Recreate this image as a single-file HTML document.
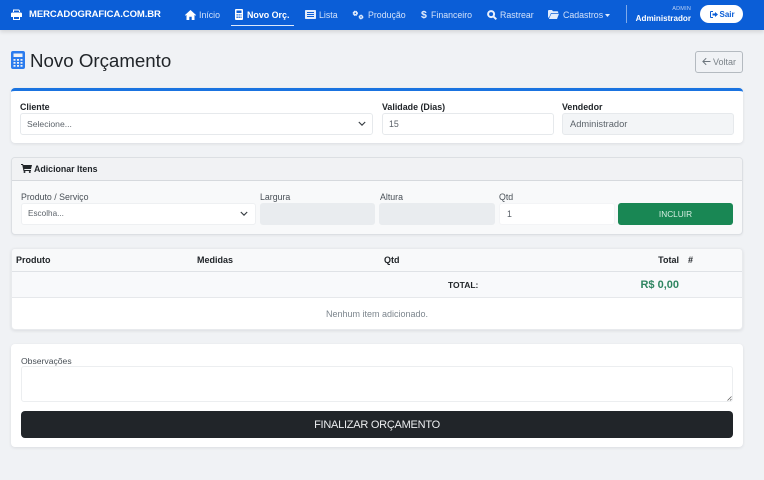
<!DOCTYPE html>
<html lang="pt-BR">
<head>
<meta charset="utf-8">
<title>Novo Orçamento</title>
<style>
*{box-sizing:border-box;margin:0;padding:0}
html,body{width:764px;height:480px;overflow:hidden;background:#f0f2f5;font-family:"Liberation Sans",sans-serif;color:#212529}
.a{position:absolute}
.t{position:absolute;white-space:nowrap;line-height:12px;height:12px}
nav{position:absolute;left:0;top:0;width:764px;height:30px;background:#0b5ed7;box-shadow:0 2px 4px rgba(0,0,0,.12)}
.n{color:#d3e2fa;font-size:8.800px;top:9px}
.card{position:absolute;background:#fff;border-radius:4px;box-shadow:0 1px 3px rgba(0,0,0,.09)}
.lb{font-size:8.900px;font-weight:bold;color:#212529}
.ll{font-size:8.800px;color:#495057}
.inp{position:absolute;height:22px;background:#fff;border:1px solid #e6e9ec;border-radius:3px;font-size:8.800px;line-height:20px;color:#5c636a;padding-left:6px;white-space:nowrap}
svg{position:absolute;display:block}
</style>
</head>
<body>
<nav>
<svg style="left:11px;top:9px" width="11" height="11" viewBox="0 0 11 11"><path fill="#fff" fill-rule="evenodd" d="M2 .5h6L9 1.500V4H8V1.800L7.200 1.500H3V4H2zM1.300 3.500h8.400c.7 0 1.300.6 1.300 1.300V8H9v3H2V8H0V4.800c0-.7.600-1.300 1.300-1.300zM3 8v2h5V8z"/></svg>
<div class="t" style="left:29px;top:9px;font-size:9.500px;font-weight:bold;color:#fff;letter-spacing:-.08px">MERCADOGRAFICA.COM.BR</div>

<svg style="left:185px;top:10px" width="11" height="10" viewBox="0 0 11 10"><path fill="#fff" d="M5.500 0L11 5l-.6.700-.9-.8V10H6.700V6.800H4.300V10H1.500V4.900l-.9.800L0 5z"/></svg>
<div class="t n" style="left:199px">Início</div>

<svg style="left:235px;top:9px" width="8" height="11" viewBox="0 0 8 11"><path fill="#fff" fill-rule="evenodd" d="M1 0h6a1 1 0 0 1 1 1v9a1 1 0 0 1-1 1H1a1 1 0 0 1-1-1V1a1 1 0 0 1 1-1zM1.500 1.500v2.500h5V1.500zM1.500 5.200v1.300h1.300V5.200zm2 0v1.300h1.300V5.200zm2 0v1.300h1V5.200zM1.500 7.500v1.500h1.300V7.500zm2 0v1.500h1.300V7.500zm2 0v1.500h1V7.500z"/></svg>
<div class="t" style="left:247px;top:8.500px;font-size:8.900px;font-weight:bold;color:#fff">Novo Orç.</div>
<div class="a" style="left:231px;top:25px;width:63px;height:1px;background:#dce8fb"></div>

<svg style="left:305px;top:10px" width="11" height="9" viewBox="0 0 11 9"><path fill="#e3edfc" fill-rule="evenodd" d="M.8 0h9.400c.4 0 .8.400.8.800v7.400c0 .4-.4.800-.8.800H.8C.4 9 0 8.600 0 8.200V.8C0 .4.400 0 .8 0zM2 2v1h7V2zM2 4v1h7V4zM2 6v1h7V6z"/></svg>
<div class="t n" style="left:319px">Lista</div>

<svg style="left:352px;top:10px" width="12" height="10" viewBox="0 0 12 10"><circle cx="3.300" cy="3.300" r="2" fill="#e3edfc" stroke="#e3edfc" stroke-width="1.300" stroke-dasharray="1.200 .4"/><circle cx="3.300" cy="3.300" r=".8" fill="#0b5ed7"/><circle cx="9" cy="7" r="1.800" fill="#e3edfc" stroke="#e3edfc" stroke-width="1.200" stroke-dasharray="1 .4"/><circle cx="9" cy="7" r=".7" fill="#0b5ed7"/></svg>
<div class="t n" style="left:368px">Produção</div>

<div class="t" style="left:421px;top:9px;font-size:10.500px;font-weight:bold;color:#e3edfc">$</div>
<div class="t n" style="left:431px">Financeiro</div>

<svg style="left:487px;top:10px" width="10" height="10" viewBox="0 0 10 10"><circle cx="4.100" cy="4.100" r="3" fill="none" stroke="#e9f0fd" stroke-width="2"/><path d="M6.400 6.400L9.300 9.300" stroke="#e9f0fd" stroke-width="2"/></svg>
<div class="t n" style="left:500px">Rastrear</div>

<svg style="left:548px;top:10px" width="11" height="9" viewBox="0 0 11 9"><path fill="#e3edfc" d="M1 0h3l1 1.200h4.300c.5 0 .9.400.9.900v.9H3L1 7.500H0V1a1 1 0 0 1 1-1zM3.300 3.800H11L9 9H.9z"/></svg>
<div class="t n" style="left:563px">Cadastros</div>
<svg style="left:604.500px;top:13.500px" width="5" height="3" viewBox="0 0 5 3"><path fill="#e3edfc" d="M0 0h5L2.500 3z"/></svg>

<div class="a" style="left:626px;top:5px;width:1px;height:18px;background:#7faaea"></div>
<div class="t" style="right:73px;top:3px;font-size:5.500px;color:#bcd2f5;letter-spacing:.2px">ADMIN</div>
<div class="t" style="right:73px;top:12.500px;font-size:8.100px;font-weight:bold;color:#fff">Administrador</div>
<div class="a" style="left:700px;top:5px;width:43px;height:18px;background:#fff;border-radius:9px"></div>
<svg style="left:710px;top:11px" width="8" height="7" viewBox="0 0 8 7"><path fill="none" stroke="#0b5ed7" stroke-width="1" d="M3 .5H1a.5.500 0 0 0-.5.500v5a.5.500 0 0 0 .5.500h2"/><path fill="#0b5ed7" d="M5 1l3 2.500L5 6V4.500H2.500v-2H5z"/></svg>
<div class="t" style="left:719.500px;top:8.500px;font-size:8px;font-weight:bold;color:#0b5ed7">Sair</div>
</nav>

<svg style="left:11px;top:51px" width="14" height="18" viewBox="0 0 14 18"><path fill="#2b7cee" fill-rule="evenodd" d="M2 0h10a2 2 0 0 1 2 2v14a2 2 0 0 1-2 2H2a2 2 0 0 1-2-2V2a2 2 0 0 1 2-2zM2.500 2.500v3.500h9V2.500zM2.500 8v1.700h2V8zm3.500 0v1.700h2V8zm3.500 0v1.700h2V8zM2.500 11v1.700h2V11zm3.500 0v1.700h2V11zm3.500 0v1.700h2V11zM2.500 14v1.700h2V14zm3.500 0v1.700h2V14zm3.500 0v1.700h2V14z"/></svg>
<div class="t" style="left:30px;top:50px;height:22px;line-height:22px;font-size:18.700px;color:#212529">Novo Orçamento</div>

<div class="a" style="left:695px;top:51px;width:48px;height:22px;border:1px solid #b4bac0;border-radius:3px"></div>
<svg style="left:702px;top:57px" width="9" height="9" viewBox="0 0 9 9"><path fill="none" stroke="#6c757d" stroke-width="1" d="M8.500 4.500H1M4.200 1.200L.9 4.500l3.300 3.300"/></svg>
<div class="t" style="left:713px;top:56px;font-size:9px;color:#7a8288">Voltar</div>

<!-- Card 1 -->
<div class="card" style="left:11px;top:88px;width:732px;height:55px;border-top:3px solid #1a73e0"></div>
<div class="t lb" style="left:20px;top:100.500px">Cliente</div>
<div class="inp" style="left:20px;top:113px;width:353px;font-size:8.600px">Selecione...</div>
<svg style="left:358px;top:121px" width="8" height="6" viewBox="0 0 8 6"><path fill="none" stroke="#343a40" stroke-width="1.100" d="M.8 1l3.200 3.200L7.200 1"/></svg>
<div class="t lb" style="left:382px;top:100.500px">Validade (Dias)</div>
<div class="inp" style="left:382px;top:113px;width:172px">15</div>
<div class="t lb" style="left:562px;top:100.500px">Vendedor</div>
<div class="inp" style="left:562px;top:113px;width:172px;background:#f3f5f7;padding-left:7px;font-size:9.300px">Administrador</div>

<!-- Card 2 -->
<div class="a" style="left:11px;top:157px;width:732px;height:78px;background:#f8f9fa;border:1px solid #dcdfe3;border-radius:4px;overflow:hidden;box-shadow:0 1px 2px rgba(0,0,0,.05)">
<div class="a" style="left:0;top:0;width:730px;height:23px;background:#f1f2f4;border-bottom:1px solid #d6d9dd"></div>
</div>
<svg style="left:21px;top:164px" width="11" height="9" viewBox="0 0 11 9"><path fill="#212529" d="M0 0h2l.4 1H11l-1 4H3.200l.2 1H10v1H2.500L1.300 1H0z"/><circle cx="3.500" cy="8" r="1" fill="#212529"/><circle cx="8.800" cy="8" r="1" fill="#212529"/></svg>
<div class="t" style="left:34px;top:163px;font-size:8.800px;font-weight:bold">Adicionar Itens</div>

<div class="t ll" style="left:21px;top:191px">Produto / Serviço</div>
<div class="inp" style="left:21px;top:203px;width:235px;border-color:#eef0f2;font-size:8.200px">Escolha...</div>
<svg style="left:240px;top:211px" width="8" height="6" viewBox="0 0 8 6"><path fill="none" stroke="#343a40" stroke-width="1.100" d="M.8 1l3.200 3.200L7.200 1"/></svg>
<div class="t ll" style="left:260px;top:191px">Largura</div>
<div class="inp" style="left:260px;top:203px;width:115px;background:#e9ecef;border-color:#e9ecef"></div>
<div class="t ll" style="left:380px;top:191px">Altura</div>
<div class="inp" style="left:379px;top:203px;width:116px;background:#e9ecef;border-color:#e9ecef"></div>
<div class="t ll" style="left:499px;top:191px">Qtd</div>
<div class="inp" style="left:499px;top:203px;width:116px;border-color:#f3f4f6;padding-left:7px">1</div>
<div class="a" style="left:618px;top:203px;width:115px;height:22px;background:#198754;border-radius:3px;color:#d6eee2;font-size:8.300px;line-height:22px;text-align:center">INCLUIR</div>

<!-- Table card -->
<div class="card" style="left:11px;top:248px;width:732px;height:82px;overflow:hidden;border:1px solid #e8eaed">
<div class="a" style="left:0;top:0;width:730px;height:23px;background:#f8f9fa;border-bottom:1px solid #dfe2e6"></div>
<div class="a" style="left:0;top:23px;width:730px;height:26px;background:#f8f9fb;border-bottom:1px solid #e6e8eb"></div>
</div>
<div class="t lb" style="left:16px;top:254px;font-size:9px">Produto</div>
<div class="t lb" style="left:197px;top:254px;font-size:9px">Medidas</div>
<div class="t lb" style="left:384px;top:254px;font-size:9px">Qtd</div>
<div class="t lb" style="right:85px;top:254px;font-size:9px">Total</div>
<div class="t lb" style="left:688px;top:254px;font-size:9px">#</div>
<div class="t lb" style="left:448px;top:278.500px;font-size:8.500px">TOTAL:</div>
<div class="t" style="right:85px;top:279px;font-size:11px;font-weight:bold;color:#2e8560">R$ 0,00</div>
<div class="t" style="left:326px;top:308px;font-size:9px;color:#7c858d">Nenhum item adicionado.</div>

<!-- Obs card -->
<div class="card" style="left:11px;top:344px;width:732px;height:103px"></div>
<div class="t ll" style="left:21px;top:354.500px;font-size:8.600px">Observações</div>
<div class="a" style="left:21px;top:366px;width:712px;height:36px;border:1px solid #eceef0;border-radius:3px;background:#fff"></div>
<svg style="left:727px;top:396px" width="5" height="5" viewBox="0 0 5 5"><path stroke="#555" stroke-width=".7" d="M.5 4.500L4.500.5M3 4.500L4.500 3"/></svg>
<div class="a" style="left:21px;top:411px;width:712px;height:27px;background:#212529;border-radius:4px;color:#eceef0;font-size:11px;letter-spacing:-.25px;line-height:28px;text-align:center">FINALIZAR ORÇAMENTO</div>
</body>
</html>
